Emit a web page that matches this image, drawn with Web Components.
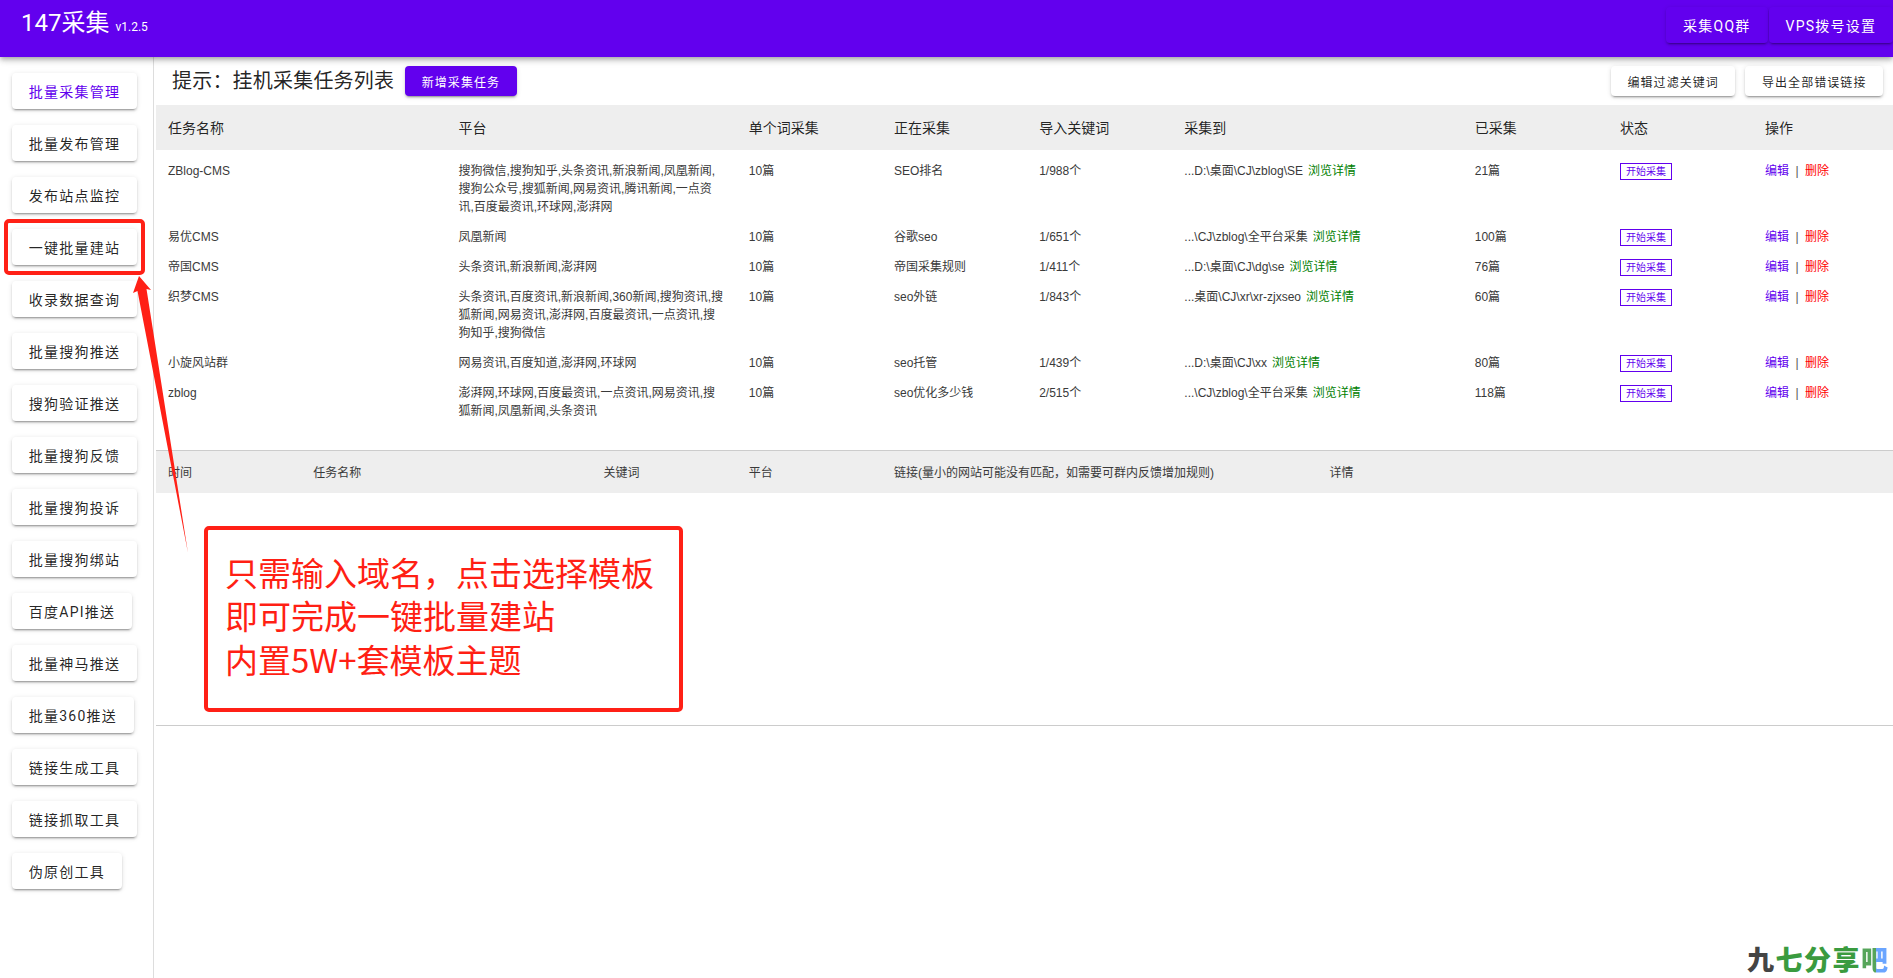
<!DOCTYPE html>
<html lang="zh-CN"><head><meta charset="utf-8"><title>147采集</title>
<style>
html,body{margin:0;padding:0;background:#fff;height:978px;overflow:hidden;font-family:Roboto,"Noto Sans CJK SC",sans-serif;color:rgba(0,0,0,.87)}
</style></head><body>
<collect-app></collect-app>
<script>
const FONT='Roboto,"Noto Sans CJK SC",sans-serif';
const ROWFONT='"Liberation Sans","Noto Sans CJK SC",sans-serif';
const SHADOW='0 3px 1px -2px rgba(0,0,0,.2),0 2px 2px 0 rgba(0,0,0,.14),0 1px 5px 0 rgba(0,0,0,.12)';
class El extends HTMLElement{
  constructor(){super();this.attachShadow({mode:'open'});}
  render(html){this.shadowRoot.innerHTML=html;}
}
class UiBtn extends El{
  connectedCallback(){
    const v=this.getAttribute('variant')||'default';
    const m={
      default:'height:36px;padding:0 16.75px;font-size:14px;letter-spacing:1.25px;background:#fff;color:rgba(0,0,0,.87)',
      nav:'height:36px;padding:0 16.75px;font-size:14px;letter-spacing:1.25px;background:#fff;color:#6200ee',
      bar:'height:36px;padding:0 17px;font-size:14px;letter-spacing:1.25px;background:#6200ee;color:#fff',
      small:'height:30px;padding:0 16.5px;font-size:12px;letter-spacing:1.07px;background:#fff;color:rgba(0,0,0,.87)',
      primary:'height:30px;padding:0 16.5px;font-size:12px;letter-spacing:1.07px;background:#6200ee;color:#fff'
    };
    this.render(`<style>:host{display:inline-flex;align-items:center;box-sizing:border-box;border-radius:4px;white-space:nowrap;flex:none;box-shadow:${SHADOW};${m[v]}}</style><slot></slot>`);
  }
}
class AppHeader extends El{
  connectedCallback(){
    this.render(`<style>
      :host{display:flex;box-sizing:border-box;height:57px;padding:7px 0 14px 21px;background:#6200ee;color:#fff;align-items:center;position:relative;z-index:2;
        box-shadow:0 2px 4px -1px rgba(0,0,0,.2),0 4px 5px 0 rgba(0,0,0,.14),0 1px 10px 0 rgba(0,0,0,.12)}
      .t{font-size:24px;line-height:36px;white-space:nowrap}
      .v{font-size:12px;margin-left:6px}
      .a{margin-left:auto;display:flex;gap:1px;width:227px;overflow:visible}
    </style>
    <div class="t">147采集<span class="v">v1.2.5</span></div>
    <div class="a"><ui-btn variant="bar">采集QQ群</ui-btn><ui-btn variant="bar">VPS拨号设置</ui-btn></div>`);
  }
}
class SideNav extends El{
  connectedCallback(){
    const items=['批量采集管理','批量发布管理','发布站点监控','一键批量建站','收录数据查询','批量搜狗推送','搜狗验证推送','批量搜狗反馈','批量搜狗投诉','批量搜狗绑站','百度API推送','批量神马推送','批量360推送','链接生成工具','链接抓取工具','伪原创工具'];
    this.render(`<style>
      :host{display:flex;flex-direction:column;align-items:flex-start;gap:16px;box-sizing:border-box;width:154px;flex:none;padding:16px 0 0 12px;border-right:1px solid #ddd}
    </style>`+items.map((t,i)=>`<ui-btn variant="${i==0?'nav':'default'}">${t}</ui-btn>`).join(''));
  }
}
class PageToolbar extends El{
  connectedCallback(){
    this.render(`<style>
      :host{display:flex;align-items:center;box-sizing:border-box;height:48px;padding:9px 10px 9px 16px;gap:10px}
      h1{margin:0 1px 0 0;font-size:20px;font-weight:400;line-height:30px;white-space:nowrap;letter-spacing:.2px}
      .s{flex:1}
    </style>
    <h1>提示：挂机采集任务列表</h1><ui-btn variant="primary">新增采集任务</ui-btn><span class="s"></span>
    <ui-btn variant="small">编辑过滤关键词</ui-btn><ui-btn variant="small">导出全部错误链接</ui-btn>`);
  }
}
const COLS='290.4px 290.4px 145.2px 145.2px 145.2px 290.4px 145.2px 145.2px 145.2px';
class TaskHead extends El{
  connectedCallback(){
    const h=['任务名称','平台','单个词采集','正在采集','导入关键词','采集到','已采集','状态','操作'];
    this.render(`<style>
      :host{display:grid;grid-template-columns:${COLS};background:#eee;height:45px;align-items:center;font-size:14px}
      span{padding:0 0 2px 12px;white-space:nowrap}
    </style>`+h.map(t=>`<span>${t}</span>`).join(''));
  }
}
class TaskRow extends El{
  connectedCallback(){
    const a=n=>this.getAttribute(n);
    this.render(`<style>
      :host{display:grid;grid-template-columns:${COLS};font-size:12px;line-height:18px;font-family:${ROWFONT};color:#3a3a3a}
      div{box-sizing:border-box;padding:6px 12px;height:auto}
      .path{white-space:nowrap}
      .go{color:#008000;margin-left:5px}
      .st{display:inline-flex;box-sizing:border-box;align-items:center;justify-content:center;width:52px;height:17px;border:1px solid #6200ee;color:#6200ee;font-size:10px;line-height:15px;vertical-align:top;margin-top:1px}
      .e{color:#6200ee}.d{color:#f00}.sep{margin:0 3px 0 3px;color:#555}
    </style>
    <div>${a('name')}</div><div>${a('platform')}</div><div>10篇</div><div>${a('current')}</div><div>${a('words')}</div>
    <div class="path">${a('path')}<span class="go">浏览详情</span></div><div>${a('done')}</div>
    <div><span class="st">开始采集</span></div><div><span class="e">编辑</span><span class="sep"> | </span><span class="d">删除</span></div>`);
  }
}
class TaskTable extends El{
  connectedCallback(){
    const rows=[
      ['ZBlog-CMS','搜狗微信,搜狗知乎,头条资讯,新浪新闻,凤凰新闻,搜狗公众号,搜狐新闻,网易资讯,腾讯新闻,一点资讯,百度最资讯,环球网,澎湃网','SEO排名','1/988个','...D:\\桌面\\CJ\\zblog\\SE','21篇'],
      ['易优CMS','凤凰新闻','谷歌seo','1/651个','...\\CJ\\zblog\\全平台采集','100篇'],
      ['帝国CMS','头条资讯,新浪新闻,澎湃网','帝国采集规则','1/411个','...D:\\桌面\\CJ\\dg\\se','76篇'],
      ['织梦CMS','头条资讯,百度资讯,新浪新闻,360新闻,搜狗资讯,搜狐新闻,网易资讯,澎湃网,百度最资讯,一点资讯,搜狗知乎,搜狗微信','seo外链','1/843个','...桌面\\CJ\\xr\\xr-zjxseo','60篇'],
      ['小旋风站群','网易资讯,百度知道,澎湃网,环球网','seo托管','1/439个','...D:\\桌面\\CJ\\xx','80篇'],
      ['zblog','澎湃网,环球网,百度最资讯,一点资讯,网易资讯,搜狐新闻,凤凰新闻,头条资讯','seo优化多少钱','2/515个','...\\CJ\\zblog\\全平台采集','118篇']
    ];
    this.render(`<style>:host{display:block;height:345px;overflow:hidden}.r{padding-top:6px}task-row{display:grid}</style><task-head></task-head><section class="r"></section>`);
    const box=this.shadowRoot.querySelector('.r');
    for(const r of rows){
      const e=document.createElement('task-row');
      ['name','platform','current','words','path','done'].forEach((k,i)=>e.setAttribute(k,r[i]));
      box.appendChild(e);
    }
  }
}
class LogTable extends El{
  connectedCallback(){
    const h=[['时间',1],['任务名称',2],['关键词',1],['平台',1],['链接(量小的网站可能没有匹配，如需要可群内反馈增加规则)',3],['详情',4]];
    this.render(`<style>
      :host{display:block;box-sizing:border-box;height:276px;border-top:1px solid #ccc;border-bottom:1px solid #ccc}
      .h{display:grid;grid-template-columns:repeat(12,145.2px);background:#eee;height:42px;align-items:center;font-size:12px;font-family:${ROWFONT};color:#3a3a3a}
      span{padding:0 0 2px 12px;white-space:nowrap}
    </style><div class="h">`+h.map(([t,n])=>`<span style="grid-column:span ${n}">${t}</span>`).join('')+`</div>`);
  }
}
class CalloutLayer extends El{
  connectedCallback(){
    this.render(`<style>
      :host{position:absolute;left:0;top:0;width:1893px;height:978px;z-index:5;pointer-events:none;display:block}
      svg{position:absolute;left:0;top:0}
      .txt{position:absolute;left:204px;top:526px;width:479px;height:186px;box-sizing:border-box;padding:25px 0 0 21px;font-size:33px;line-height:43.4px;color:#ff1f14;white-space:nowrap;font-family:"Noto Sans CJK SC",sans-serif}
    </style>
    <svg width="1893" height="978" viewBox="0 0 1893 978">
      <rect x="6" y="221" width="137" height="52" rx="3" fill="none" stroke="#ff2016" stroke-width="4"/>
      <rect x="206" y="528" width="475" height="182" rx="3" fill="#fff" stroke="#ff2016" stroke-width="4"/>
      <polygon points="139,276 151,290 146.5,289 188,553 137.5,291 133,293" fill="#ff2016"/>
    </svg>
    <div class="txt">只需输入域名，点击选择模板<br>即可完成一键批量建站<br>内置5W+套模板主题</div>`);
  }
}
class WaterMark extends El{
  connectedCallback(){
    this.render(`<style>
      :host{position:absolute;right:3.5px;bottom:3px;z-index:6;display:flex;font-size:27px;line-height:32px;font-weight:900;color:#3a9b3f;letter-spacing:1.5px;font-family:"Noto Sans CJK SC",sans-serif}
      .k{color:#444}
      .b{background:linear-gradient(90deg,#56a55a 0 52%,#6aa5ff 52% 100%);-webkit-background-clip:text;background-clip:text;color:transparent}
    </style><span class="k">九</span><span>七分享</span><span class="b">吧</span>`);
  }
}
class CollectApp extends El{
  connectedCallback(){
    this.render(`<style>
      :host{display:flex;flex-direction:column;width:1893px;height:978px;position:relative;overflow:hidden;font-family:${FONT}}
      .b{display:flex;flex:1;min-height:0}
      main{flex:1;min-width:0;padding-left:2px;overflow:hidden}
    </style>
    <app-header></app-header>
    <div class="b"><side-nav></side-nav><main><page-toolbar></page-toolbar><task-table></task-table><log-table></log-table></main></div>
    <callout-layer></callout-layer><water-mark></water-mark>`);
  }
}
const defs={'ui-btn':UiBtn,'app-header':AppHeader,'side-nav':SideNav,'page-toolbar':PageToolbar,'task-head':TaskHead,'task-row':TaskRow,'task-table':TaskTable,'log-table':LogTable,'callout-layer':CalloutLayer,'water-mark':WaterMark,'collect-app':CollectApp};
for(const k in defs)customElements.define(k,defs[k]);
</script>
</body></html>
